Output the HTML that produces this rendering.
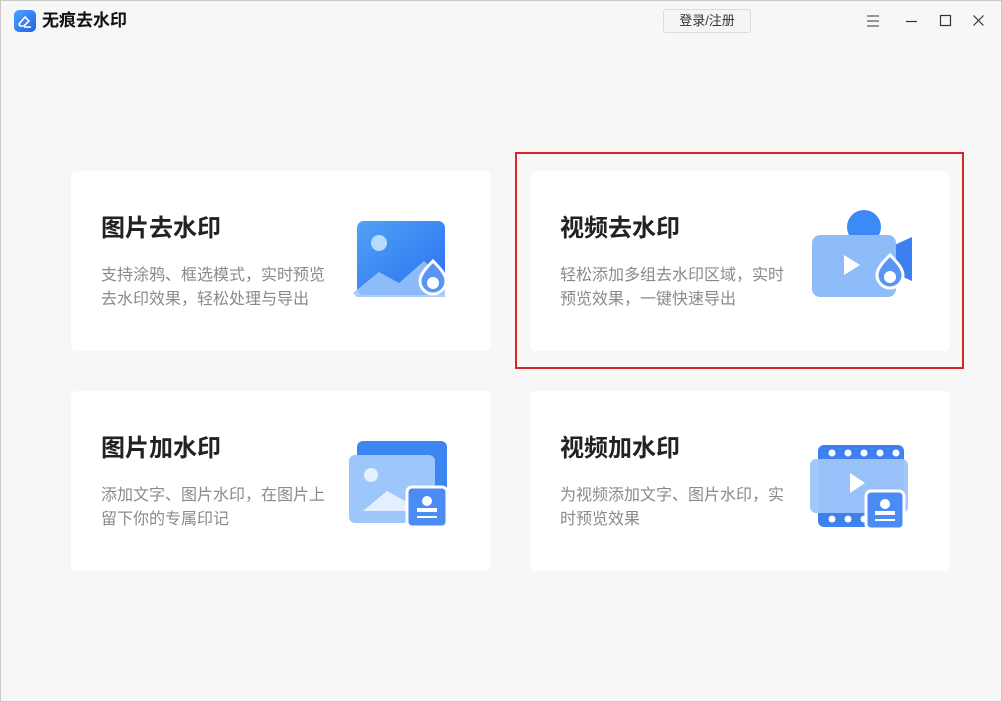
<!DOCTYPE html>
<html><head><meta charset="utf-8"><style>
*{margin:0;padding:0;box-sizing:border-box}
body{width:1002px;height:702px;background:#f7f7f7;font-family:"Liberation Sans","Noto Sans CJK SC",sans-serif;position:relative;overflow:hidden}
.frame{position:absolute;left:0;top:0;width:1002px;height:702px;border:1px solid #c9c9c9;pointer-events:none}
.abs{position:absolute}
.card{position:absolute;background:#fff;border-radius:6px;width:420px;height:180px}
.card h2{position:absolute;left:30px;top:41px;font-size:24px;line-height:34px;font-weight:bold;color:#222}
.card p{position:absolute;left:30px;top:93px;font-size:16px;line-height:24px;color:#8a8a8a;width:230px}
.card svg{position:absolute}
</style></head><body>
<div class="frame"></div>
<svg class="abs" style="left:14px;top:10px" width="22" height="22" viewBox="0 0 22 22"><defs><linearGradient id="lg" x1="0" y1="0" x2="1" y2="1"><stop offset="0" stop-color="#4aa3ff"/><stop offset="1" stop-color="#2561e6"/></linearGradient></defs><rect width="22" height="22" rx="5" fill="url(#lg)"/><path d="M5 14l6-7 4 4-5 5H6z" fill="none" stroke="#fff" stroke-width="1.6"/><path d="M10 17h7" stroke="#fff" stroke-width="1.6"/></svg>
<div class="abs" style="left:42px;top:9px;font-size:17px;line-height:24px;font-weight:bold;color:#111">无痕去水印</div>
<div class="abs" style="left:663px;top:9px;width:88px;height:24px;border:1px solid #dcdcdc;border-radius:3px;background:#f5f5f5;font-size:13px;color:#333;text-align:center;line-height:22px">登录/注册</div>
<svg class="abs" style="left:866px;top:14px" width="14" height="14"><path d="M1 2h12M1 7h12M1 12h12" stroke="#777" stroke-width="1.5"/></svg>
<svg class="abs" style="left:905px;top:14px" width="14" height="14"><path d="M1 7.5h11" stroke="#333" stroke-width="1.2"/></svg>
<svg class="abs" style="left:939px;top:14px" width="14" height="14"><rect x="1.5" y="1.5" width="10" height="10" fill="none" stroke="#333" stroke-width="1.2"/></svg>
<svg class="abs" style="left:972px;top:14px" width="14" height="14"><path d="M1.5 1.5l10 10M11.5 1.5l-10 10" stroke="#333" stroke-width="1.2"/></svg>

<div class="card" style="left:71px;top:171px"><h2>图片去水印</h2><p>支持涂鸦、框选模式，实时预览去水印效果，轻松处理与导出</p>
<svg style="left:278px;top:46px" width="110" height="90" viewBox="0 0 110 90"><defs><linearGradient id="b1" x1="0" y1="0" x2="1" y2="1"><stop offset="0" stop-color="#4fa2f7"/><stop offset="1" stop-color="#2a6ff0"/></linearGradient></defs><rect x="8" y="4" width="88" height="74" rx="7" fill="url(#b1)"/><circle cx="30" cy="26" r="8" fill="#b9d9ff"/><path d="M4 76 30 55 50 66 75 44 96 62V80H8z" fill="#9cc6fa" opacity=".85"/><path d="M84 44c-8 8-13 14-13 20a13 13 0 0026 0c0-6-5-12-13-20z" fill="#5a95f3" stroke="#fff" stroke-width="3"/><circle cx="84" cy="66" r="6" fill="#fff"/></svg></div>

<div class="card" style="left:530px;top:171px"><h2>视频去水印</h2><p>轻松添加多组去水印区域，实时预览效果，一键快速导出</p>
<svg style="left:276px;top:36px" width="110" height="100" viewBox="0 0 110 100"><circle cx="58" cy="20" r="17" fill="#3b8af5"/><path d="M84 40l22-10v44l-22-10z" fill="#3b7ff0"/><rect x="6" y="28" width="84" height="62" rx="8" fill="#8ebcf8"/><path d="M38 48v20l16-10z" fill="#fff"/><path d="M84 48c-8 8-13 14-13 20a13 13 0 0026 0c0-6-5-12-13-20z" fill="#5a95f3" stroke="#fff" stroke-width="3"/><circle cx="84" cy="70" r="6" fill="#fff"/></svg></div>

<div class="card" style="left:71px;top:391px"><h2>图片加水印</h2><p>添加文字、图片水印，在图片上留下你的专属印记</p>
<svg style="left:276px;top:48px" width="110" height="90" viewBox="0 0 110 90"><rect x="10" y="2" width="90" height="70" rx="6" fill="#3d86f2"/><rect x="2" y="16" width="86" height="68" rx="6" fill="#9dc6fa"/><circle cx="24" cy="36" r="7" fill="#e4f0ff"/><path d="M16 72 40 52 58 62 76 48V72z" fill="#e4f0ff"/><rect x="60" y="48" width="40" height="40" rx="5" fill="#4a8cf3" stroke="#fff" stroke-width="3"/><circle cx="80" cy="62" r="5" fill="#fff"/><rect x="70" y="69" width="20" height="4" fill="#fff"/><rect x="70" y="77" width="20" height="2" fill="#fff"/></svg></div>

<div class="card" style="left:530px;top:391px"><h2>视频加水印</h2><p>为视频添加文字、图片水印，实时预览效果</p>
<svg style="left:276px;top:50px" width="110" height="90" viewBox="0 0 110 90"><rect x="12" y="4" width="86" height="82" rx="6" fill="#3d80ee"/><g fill="#fff"><circle cx="26" cy="12" r="3.5"/><circle cx="42" cy="12" r="3.5"/><circle cx="58" cy="12" r="3.5"/><circle cx="74" cy="12" r="3.5"/><circle cx="90" cy="12" r="3.5"/><circle cx="26" cy="78" r="3.5"/><circle cx="42" cy="78" r="3.5"/><circle cx="58" cy="78" r="3.5"/></g><rect x="4" y="18" width="98" height="54" rx="6" fill="#9dc4f9" opacity=".95"/><path d="M44 32v20l15-10z" fill="#fff"/><rect x="60" y="50" width="38" height="38" rx="5" fill="#4a8cf3" stroke="#fff" stroke-width="3"/><circle cx="79" cy="63" r="5" fill="#fff"/><rect x="69" y="70" width="20" height="4" fill="#fff"/><rect x="69" y="78" width="20" height="2" fill="#fff"/></svg></div>

<div class="abs" style="left:515px;top:152px;width:449px;height:217px;border:2px solid #d6262a"></div>
</body></html>
